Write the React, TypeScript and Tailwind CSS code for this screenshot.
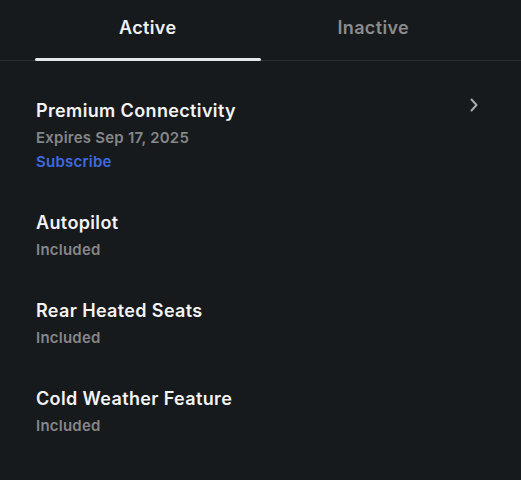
import { useState } from 'react';

type Feature = {
  name: string;
  status: string;
  action?: string;
  link?: boolean;
};

const features: Feature[] = [
  { name: 'Premium Connectivity', status: 'Expires Sep 17, 2025', action: 'Subscribe', link: true },
  { name: 'Autopilot', status: 'Included' },
  { name: 'Rear Heated Seats', status: 'Included' },
  { name: 'Cold Weather Feature', status: 'Included' },
];

function ChevronRight() {
  return (
    <svg
      className="h-4 w-4"
      viewBox="0 0 16 16"
      fill="none"
      stroke="currentColor"
      strokeWidth="2"
      strokeLinecap="round"
      strokeLinejoin="round"
      aria-hidden
    >
      <path d="M5.5 2.5l5 5.5-5 5.5" />
    </svg>
  );
}

export default function App() {
  const [tab, setTab] = useState<'active' | 'inactive'>('active');

  return (
    <div
      className="min-h-[480px] w-full bg-[#171a1c] text-white"
      style={{ fontFamily: 'Inter, "Noto Sans", sans-serif' }}
    >
      {/* Tabs */}
      <div className="flex h-[61px] border-b border-[#2c2f31] px-[35px]">
        {(['active', 'inactive'] as const).map((key) => (
          <button
            key={key}
            type="button"
            onClick={() => setTab(key)}
            className={[
              'relative flex flex-1 items-start justify-center pt-[16px] text-[18px] leading-6 font-semibold tracking-[0.02em]',
              tab === key ? 'text-[#f1f1f1]' : 'text-[#8a8c8e]',
            ].join(' ')}
          >
            <span>{key === 'active' ? 'Active' : 'Inactive'}</span>
            {tab === key && (
              <span className="absolute right-0 bottom-[-1px] left-0 h-[3px] rounded-full bg-[#e4e5e6]" />
            )}
          </button>
        ))}
      </div>

      {/* Feature list */}
      <div className="flex flex-col gap-[38px] px-[36px] pt-[38px]">
        {features.map((f) => (
          <div key={f.name} className="flex items-start justify-between">
            <div className="flex flex-col">
              <p className="text-[18px] leading-6 font-semibold tracking-[0.02em] text-[#f3f3f3]">{f.name}</p>
              <p className="mt-[4px] text-[15px] leading-[22px] font-semibold tracking-[0.015em] text-[#85878a]">
                {f.status}
              </p>
              {f.action && (
                <p className="mt-[2px] text-[15px] leading-[22px] font-semibold tracking-[0.015em] text-[#3e6ae1]">
                  {f.action}
                </p>
              )}
            </div>
            {f.link && (
              <span className="mt-[-2px] mr-[3px] text-[#a9abad]">
                <ChevronRight />
              </span>
            )}
          </div>
        ))}
      </div>
    </div>
  );
}
